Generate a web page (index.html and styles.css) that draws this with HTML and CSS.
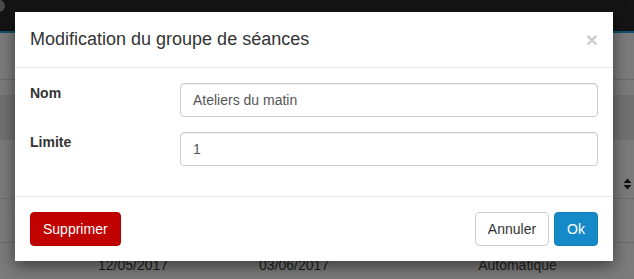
FILE: index.html
```html
<!DOCTYPE html>
<html lang="fr">
<head>
<meta charset="utf-8">
<title>Modification du groupe de séances</title>
<link rel="stylesheet" href="styles.css">
</head>
<body>
<div class="page">
  <div class="topbar"><span class="avatar"></span></div>
  <div class="accent"></div>
  <div class="trow r1"></div>
  <div class="trow r2"></div>
  <div class="trow r3 dark"></div>
  <div class="trow r4">
    <svg class="sort" width="9" height="12" viewBox="0 0 9 12"><path d="M4.5 0.5 L8.5 5 L0.5 5 Z M4.5 11.5 L8.5 7 L0.5 7 Z" fill="#111"/></svg>
  </div>
  <div class="trow r5"></div>
  <div class="trow r6">
    <span class="cell c1">12/05/2017</span>
    <span class="cell c2">03/06/2017</span>
    <span class="cell c3">Automatique</span>
  </div>
</div>

<div class="modal">
  <div class="modal-header">
    <h4 class="modal-title">Modification du groupe de séances</h4>
    <span class="close">×</span>
  </div>
  <div class="modal-body">
    <div class="form-group">
      <label class="label">Nom</label>
      <div class="input">Ateliers du matin</div>
    </div>
    <div class="form-group">
      <label class="label">Limite</label>
      <div class="input">1</div>
    </div>
  </div>
  <div class="modal-footer">
    <button class="btn btn-danger">Supprimer</button>
    <div class="actions">
      <button class="btn btn-default">Annuler</button>
      <button class="btn btn-primary">Ok</button>
    </div>
  </div>
</div>
</body>
</html>
```
FILE: styles.css
```css
* { box-sizing: border-box; }
html, body {
  margin: 0;
  padding: 0;
  width: 634px;
  height: 279px;
  overflow: hidden;
  font-family: "Liberation Sans", Arial, sans-serif;
  font-size: 14px;
  line-height: 1.42857;
  color: #333;
  background: #7b7b7b;
}
.page { position: relative; width: 634px; height: 279px; }
.topbar {
  height: 31px;
  background: #141414;
  display: flex;
}
.avatar {
  display: block;
  width: 12px;
  height: 12px;
  margin: 0 0 0 -7px;
  border-radius: 50%;
  background: #4a4a4a;
}
.accent { height: 2px; background: #11506e; }
.trow { position: relative; border-bottom: 1px solid #6c6c6c; background: #7b7b7b; }
.r1 { height: 47px; }
.r2 { height: 15px; border-bottom: none; }
.r3 { height: 45px; border-bottom: none; }
.dark { background: #717171; }
.r4 { height: 59px; display: flex; justify-content: flex-end; align-items: flex-start; }
.sort { margin: 38px 2px 0 0; display: block; }
.r5 { height: 44px; }
.r6 { height: 36px; border-bottom: none; display: flex; }
.cell { color: #1c1c1c; padding-top: 13px; }
.c1 { margin-left: 98px; }
.c2 { margin-left: 91px; }
.c3 { margin-left: 149px; }

.modal {
  position: absolute;
  left: 15px;
  top: 12px;
  width: 598px;
  background: #fff;
  box-shadow: 0 5px 15px rgba(0,0,0,.5);
}
.modal-header {
  padding: 15px;
  border-bottom: 1px solid #e5e5e5;
  display: flex;
  justify-content: space-between;
  align-items: flex-start;
}
.modal-title {
  margin: 0;
  font-size: 18px;
  font-weight: normal;
  line-height: 25px;
  color: #333;
}
.close {
  font-size: 21px;
  font-weight: bold;
  line-height: 1;
  color: #000;
  opacity: .2;
  margin-top: 2px;
  text-shadow: 0 1px 0 #fff;
}
.modal-body { padding: 15px; }
.form-group {
  display: grid;
  grid-template-columns: 150px 1fr;
  margin-bottom: 15px;
}
.label {
  font-weight: bold;
  color: #333;
  line-height: 20px;
}
.input {
  height: 34px;
  padding: 6px 12px;
  border: 1px solid #ccc;
  border-radius: 4px;
  color: #555;
  box-shadow: inset 0 1px 1px rgba(0,0,0,.075);
  line-height: 20px;
}
.modal-footer {
  padding: 15px;
  border-top: 1px solid #e5e5e5;
  display: flex;
  justify-content: space-between;
}
.actions { display: flex; gap: 5px; }
.btn {
  font-family: "Liberation Sans", Arial, sans-serif;
  font-size: 14px;
  line-height: 20px;
  height: 34px;
  padding: 6px 12px;
  border: 1px solid transparent;
  border-radius: 4px;
  margin: 0;
}
.btn-danger { background: #c10000; border-color: #b30000; color: #fff; }
.btn-default { background: #fff; border-color: #ccc; color: #333; }
.btn-primary { background: #168ac9; border-color: #1380bb; color: #fff; }
```
